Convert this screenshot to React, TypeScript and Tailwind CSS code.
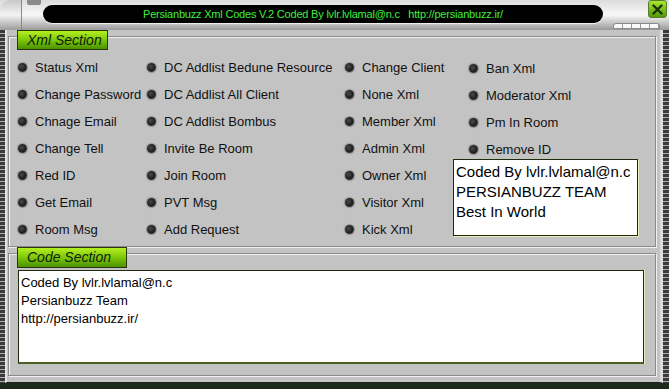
import React from 'react';

const font = { fontFamily: '"Liberation Sans", Arial, sans-serif' };

const col1 = ['Status Xml', 'Change Password', 'Chnage Email', 'Change Tell', 'Red ID', 'Get Email', 'Room Msg'];
const col2 = ['DC Addlist Bedune Resource', 'DC Addlist All Client', 'DC Addlist Bombus', 'Invite Be Room', 'Join Room', 'PVT Msg', 'Add Request'];
const col3 = ['Change Client', 'None Xml', 'Member Xml', 'Admin Xml', 'Owner Xml', 'Visitor Xml', 'Kick Xml'];
const col4 = ['Ban Xml', 'Moderator Xml', 'Pm In Room', 'Remove ID'];

const Item: React.FC<{ label: string }> = ({ label }) => (
    <div className="flex items-center h-[27px] gap-[8px] whitespace-nowrap">
        <span className="w-[9px] h-[9px] rounded-full bg-[radial-gradient(circle_at_40%_40%,#4a4a4a,#1e1e1e_55%,#5a5a5a)] shadow-[0_0_1px_1px_rgba(60,60,60,0.35)] shrink-0"></span>
        <span className="text-[13px] text-[#111]">{label}</span>
    </div>
);

const Tab: React.FC<{ label: string; className: string }> = ({ label, className }) => (
    <div className={`absolute left-[8px] flex items-center pl-[9px] whitespace-nowrap border border-[#28380c] bg-gradient-to-b from-[#b4f020] via-[#7cc808] to-[#4c9200] ${className}`}>
        <span className="text-[14px] italic text-[#10200a]">{label}</span>
    </div>
);

export default function App() {
    return (
        <div style={font} className="w-[669px] h-[389px] flex flex-col bg-[#1c2a1c] overflow-hidden">
            {/* Title chrome */}
            <div className="relative h-[30px] shrink-0 bg-gradient-to-b from-[#dcdcdc] via-[#f8f8f8] to-[#9a9a9a] flex items-start pt-[5px] pl-[43px] pr-[66px]">
                <div className="absolute left-0 top-0 w-[22px] h-[30px] rounded-tl-[10px] border-r border-[#8a8a8a] bg-gradient-to-b from-[#c8c8c8] via-[#f4f4f4] to-[#9c9c9c]"></div>
                <div className="absolute left-[27px] top-0 w-[14px] h-[5px] rounded-b-[2px] bg-[#8a8a8a]"></div>
                <div className="h-[18px] flex-1 rounded-full bg-black flex items-center justify-center shadow-[0_1px_1px_rgba(255,255,255,0.8)]">
                    <span className="text-[11px] text-[#3ef03e] whitespace-pre tracking-[-0.2px]">
                        Persianbuzz Xml Codes V.2 Coded By lvlr.lvlamal@n.c   http://persianbuzz.ir/
                    </span>
                </div>
                <div className="absolute right-[2px] top-0 w-[19px] h-[18px] rounded-[3px] bg-gradient-to-b from-[#a8e830] to-[#4e9a08] border border-[#5a7a30] flex items-center justify-center">
                    <svg width="11" height="11" viewBox="0 0 11 11">
                        <path d="M1.5 1.5 L9.5 9.5 M9.5 1.5 L1.5 9.5" stroke="#1c3008" strokeWidth="2.4" strokeLinecap="round" />
                    </svg>
                </div>
                <div className="absolute right-[9px] top-[23px] w-[47px] h-[6px] rounded-t-[3px] bg-[repeating-linear-gradient(90deg,#fafafa_0px,#fafafa_8px,#9a9a9a_8px,#9a9a9a_9px)] border border-[#8a8a8a]"></div>
            </div>

            {/* Body */}
            <div className="flex flex-1 min-h-0">
                <div className="w-[5px] bg-[repeating-linear-gradient(180deg,#3a3a3a_0px,#3a3a3a_3px,#b0b0b0_3px,#b0b0b0_4px)]"></div>
                <div className="flex-1 flex flex-col bg-[#c3c3c3] border-l-2 border-[#e4e4e4] border-r-[3px] border-r-[#dcdcdc] border-b border-b-[#202020] pb-[6px]">
                    {/* Xml Section */}
                    <div className="relative mt-[6px] ml-[1px] mr-[4px] h-[211px] border border-[#8a8a8a] shadow-[inset_1px_1px_0_#f0f0f0,1px_1px_0_#f0f0f0]">
                        <Tab label="Xml Section" className="top-[-7px] w-[91px] h-[20px]" />
                        <div className="grid grid-cols-[129px_198px_108px_1fr] pl-[9px] pt-[17px]">
                            <div className="flex flex-col">
                                {col1.map((l) => <Item key={l} label={l} />)}
                            </div>
                            <div className="flex flex-col">
                                {col2.map((l) => <Item key={l} label={l} />)}
                            </div>
                            <div className="flex flex-col">
                                {col3.map((l) => <Item key={l} label={l} />)}
                            </div>
                            <div className="flex flex-col">
                                <div className="pl-[16px] pt-[1px]">
                                    {col4.map((l) => <Item key={l} label={l} />)}
                                </div>
                                <div className="mt-[-4px] w-[185px] h-[77px] bg-white border border-[#1c2c0c] shadow-[1px_1px_0_#e8f0c0] pl-[2px] pt-[2px] text-[15px] leading-[20px] text-black">
                                    <div>Coded By lvlr.lvlamal@n.c</div>
                                    <div>PERSIANBUZZ TEAM</div>
                                    <div>Best In World</div>
                                </div>
                            </div>
                        </div>
                    </div>

                    {/* Code Section */}
                    <div className="relative mt-[6px] ml-[1px] mr-[4px] flex-1 border border-[#8a8a8a] shadow-[inset_1px_1px_0_#f0f0f0,1px_1px_0_#f0f0f0] pt-[16px] pl-[9px] pr-[11px] pb-[11px] flex">
                        <Tab label="Code Section" className="top-[-7px] w-[110px] h-[21px]" />
                        <div className="flex-1 bg-white border border-[#1c2c0c] border-b-2 border-b-[#4c6028] shadow-[1px_0_0_#e8f0c0] pl-[2px] pt-[3px] text-[13px] leading-[18px] text-black">
                            <div>Coded By lvlr.lvlamal@n.c</div>
                            <div>Persianbuzz Team</div>
                            <div>http://persianbuzz.ir/</div>
                        </div>
                    </div>
                </div>
                <div className="w-[6px] bg-[repeating-linear-gradient(180deg,#3a3a3a_0px,#3a3a3a_3px,#b0b0b0_3px,#b0b0b0_4px)]"></div>
            </div>
            <div className="h-[6px] shrink-0 bg-[#1c2a1c]"></div>
        </div>
    );
}
